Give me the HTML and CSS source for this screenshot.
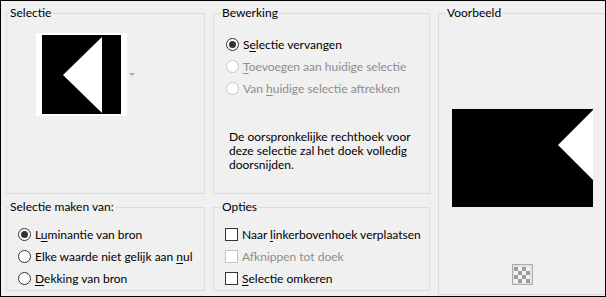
FILE: index.html
```html
<!DOCTYPE html>
<html lang="nl">
<head>
    <meta charset="UTF-8">
    <title>Selectie uit masker</title>
    <link rel="stylesheet" href="styles.css">
</head>
<body>
    <div class="dialog">
        <!-- Bron van de selectie -->
        <fieldset class="group group-sel">
            <legend>Selectie</legend>
            <div class="thumb-row">
                <div class="thumb">
                    <svg width="79" height="79" viewBox="0 0 79 79">
                        <rect width="79" height="79" fill="#000"/>
                        <polygon points="21,40 60,2 60,78" fill="#fff"/>
                    </svg>
                </div>
                <span class="drop"></span>
            </div>
        </fieldset>

        <fieldset class="group group-edit">
            <legend>Bewerking</legend>
            <div class="options">
                <label class="opt"><span class="radio checked"></span><span>S<u>e</u>lectie vervangen</span></label>
                <label class="opt disabled"><span class="radio"></span><span><u>T</u>oevoegen aan huidige selectie</span></label>
                <label class="opt disabled"><span class="radio"></span><span>Van <u>h</u>uidige selectie aftrekken</span></label>
            </div>
            <p class="note">De oorspronkelijke rechthoek voor<br>deze selectie zal het doek volledig<br>doorsnijden.</p>
        </fieldset>

        <!-- Voorbeeld -->
        <fieldset class="group group-preview">
            <legend>Voorbeeld</legend>
            <div class="preview">
                <svg width="141" height="98" viewBox="0 0 141 98">
                    <rect width="141" height="98" fill="#000"/>
                    <polygon points="106,36 142,0 142,72" fill="#fff"/>
                </svg>
            </div>
            <button class="bg-btn" type="button">
                <svg width="16" height="16" viewBox="0 0 16 16">
                    <rect width="16" height="16" fill="#f4f4f4"/>
                    <rect x="0" y="0" width="4" height="4" fill="#9c9c9c"/>
                    <rect x="8" y="0" width="4" height="4" fill="#9c9c9c"/>
                    <rect x="4" y="4" width="4" height="4" fill="#9c9c9c"/>
                    <rect x="12" y="4" width="4" height="4" fill="#9c9c9c"/>
                    <rect x="0" y="8" width="4" height="4" fill="#9c9c9c"/>
                    <rect x="8" y="8" width="4" height="4" fill="#9c9c9c"/>
                    <rect x="4" y="12" width="4" height="4" fill="#9c9c9c"/>
                    <rect x="12" y="12" width="4" height="4" fill="#9c9c9c"/>
                </svg>
            </button>
        </fieldset>

        <fieldset class="group group-source">
            <legend>Selectie maken van:</legend>
            <div class="options">
                <label class="opt"><span class="radio checked"></span><span>L<u>u</u>minantie van bron</span></label>
                <label class="opt"><span class="radio"></span><span>Elke waarde niet gelijk aan <u>n</u>ul</span></label>
                <label class="opt"><span class="radio"></span><span><u>D</u>ekking van bron</span></label>
            </div>
        </fieldset>

        <fieldset class="group group-extra">
            <legend>Opties</legend>
            <div class="options">
                <label class="opt"><span class="check"></span><span>Naar <u>l</u>inkerbovenhoek verplaatsen</span></label>
                <label class="opt disabled"><span class="check"></span><span>Af<u>k</u>nippen tot doek</span></label>
                <label class="opt"><span class="check"></span><span><u>S</u>electie omkeren</span></label>
            </div>
        </fieldset>
    </div>
</body>
</html>
```

FILE: styles.css
```css
/* General */
html, body {
    margin: 0;
    padding: 0;
}

body {
    width: 606px;
    height: 297px;
    box-sizing: border-box;
    border: 1px solid #000;
    background-color: #f0f0f0;
    font-family: Lato, "Noto Sans", sans-serif;
    font-size: 12px;
    color: #000;
    overflow: hidden;
}

.dialog {
    display: grid;
    grid-template-columns: 199px 217px 167px;
    grid-template-rows: 188px 95px;
    gap: 6px 8px;
    padding: 5px 0 0 5px;
}

/* Group boxes */
.group {
    margin: 0;
    padding: 0;
    min-width: 0;
    border: 1px solid #dcdcdc;
    box-sizing: border-box;
}

.group legend {
    margin-left: 7px;
    padding: 0 1px;
    line-height: 14px;
}

.group-sel legend,
.group-source legend {
    margin-left: 2px;
}

.group-sel {
    grid-column: 1;
    grid-row: 1;
}

.group-edit {
    grid-column: 2;
    grid-row: 1;
}

.group-preview {
    grid-column: 3;
    grid-row: 1 / 3;
    border-right: none;
    display: flex;
    flex-direction: column;
    align-items: center;
}

.group-source {
    grid-column: 1;
    grid-row: 2;
    height: 91px;
}

.group-extra {
    grid-column: 2;
    grid-row: 2;
    height: 91px;
}

/* Thumbnail */
.thumb-row {
    display: flex;
    align-items: center;
    gap: 2px;
    margin: 13px 0 0 29px;
}

.thumb {
    background-color: #fff;
    padding: 2px 6px;
    line-height: 0;
}

.drop {
    width: 0;
    height: 0;
    border-left: 3px solid transparent;
    border-right: 3px solid transparent;
    border-top: 3px solid #a8a8a8;
}

/* Radio and checkbox rows */
.options {
    display: flex;
    flex-direction: column;
    margin: 13px 0 0 12px;
}

.group-source .options,
.group-extra .options {
    margin-top: 9px;
    margin-left: 11px;
}

.opt {
    display: flex;
    align-items: center;
    height: 22px;
    gap: 4px;
    white-space: nowrap;
}

.opt u {
    text-decoration-thickness: 1px;
    text-underline-offset: 2px;
}

.opt.disabled {
    color: #8d8d8d;
}

.radio {
    width: 11px;
    height: 11px;
    border: 1px solid #333;
    border-radius: 50%;
    background-color: #fff;
    display: flex;
    align-items: center;
    justify-content: center;
    flex-shrink: 0;
}

.radio.checked::after {
    content: "";
    width: 7px;
    height: 7px;
    border-radius: 50%;
    background-color: #333;
}

.check {
    width: 11px;
    height: 11px;
    border: 1px solid #333;
    background-color: #fff;
    flex-shrink: 0;
}

.disabled .radio,
.disabled .check {
    border-color: #c4c4c4;
}

.note {
    margin: 31px 0 0 15px;
    line-height: 14px;
}

/* Preview */
.preview {
    margin-top: 89px;
    line-height: 0;
}

.bg-btn {
    margin-top: 57px;
    width: 21px;
    height: 21px;
    padding: 0;
    border: 1px solid #adadad;
    background-color: #e1e1e1;
    display: flex;
    align-items: center;
    justify-content: center;
}
```
